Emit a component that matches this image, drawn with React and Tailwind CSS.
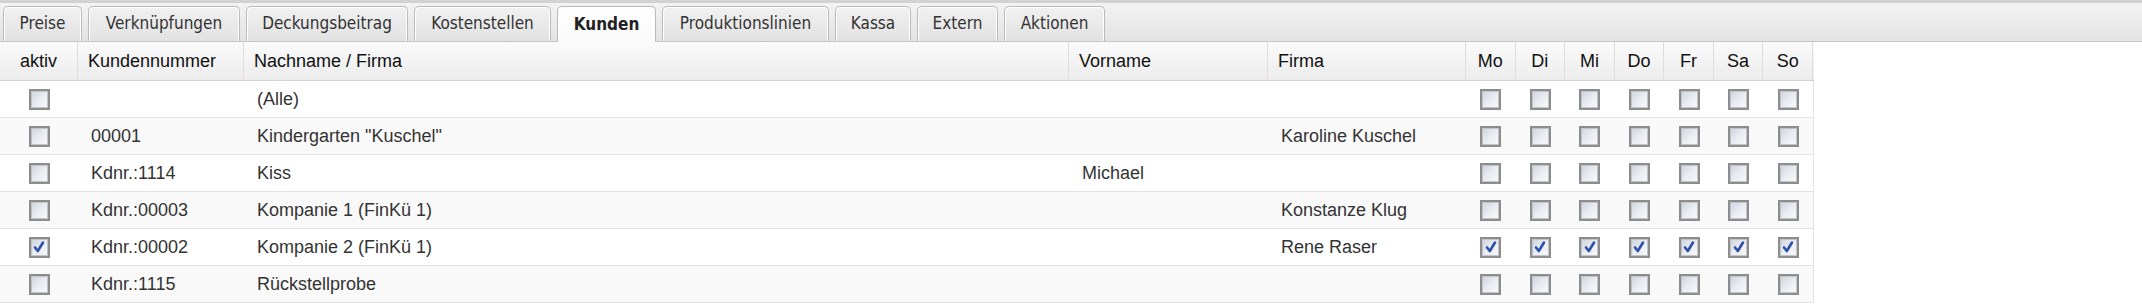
import React from 'react';

const tabs = [
  { label: 'Preise', w: 'w-[79px]' },
  { label: 'Verknüpfungen', w: 'w-[152px]' },
  { label: 'Deckungsbeitrag', w: 'w-[162px]' },
  { label: 'Kostenstellen', w: 'w-[137px]' },
  { label: 'Kunden', w: 'w-[99px]', active: true },
  { label: 'Produktionslinien', w: 'w-[167px]' },
  { label: 'Kassa', w: 'w-[76px]' },
  { label: 'Extern', w: 'w-[81px]' },
  { label: 'Aktionen', w: 'w-[101px]' },
];

const days = ['Mo', 'Di', 'Mi', 'Do', 'Fr', 'Sa', 'So'];

const rows = [
  { aktiv: false, nr: '', name: '(Alle)', vorname: '', firma: '', days: false },
  { aktiv: false, nr: '00001', name: 'Kindergarten "Kuschel"', vorname: '', firma: 'Karoline Kuschel', days: false },
  { aktiv: false, nr: 'Kdnr.:1114', name: 'Kiss', vorname: 'Michael', firma: '', days: false },
  { aktiv: false, nr: 'Kdnr.:00003', name: 'Kompanie 1 (FinKü 1)', vorname: '', firma: 'Konstanze Klug', days: false },
  { aktiv: true, nr: 'Kdnr.:00002', name: 'Kompanie 2 (FinKü 1)', vorname: '', firma: 'Rene Raser', days: true },
  { aktiv: false, nr: 'Kdnr.:1115', name: 'Rückstellprobe', vorname: '', firma: '', days: false },
];

const cols = 'grid grid-cols-[78px_166px_825px_199px_198px_repeat(7,49.57px)]';

function Checkbox({ checked }) {
  return (
    <span className="flex h-[21px] w-[21px] items-center justify-center border-2 border-[#8d8d8d] bg-gradient-to-br from-[#cdd2dc] via-[#e9ecf1] to-[#fafafb] shadow-[inset_0_0_0_1px_#c2c4c9]">
      {checked && (
        <svg width="14" height="14" viewBox="0 0 14 14">
          <path d="M3 7.5 L5.8 11 L11 2.5" fill="none" stroke="#2f50a8" strokeWidth="2.6" strokeLinecap="round" strokeLinejoin="round" />
        </svg>
      )}
    </span>
  );
}

export default function App() {
  return (
    <div className="min-h-[304px] w-[2142px] bg-white font-['Liberation_Sans',Arial,sans-serif]">
      {/* Tab bar */}
      <div className="flex h-[42px] items-end gap-[6px] border-t-[3px] border-b border-t-[#d2d2d2] border-b-[#c6c6c6] bg-gradient-to-b from-[#f3f3f3] to-[#e3e3e3] pl-[3px]">
        {tabs.map((t) =>
          t.active ? (
            <div
              key={t.label}
              className={`${t.w} -mb-px flex h-[36px] items-center justify-center rounded-t-[5px] border border-b-0 border-[#b9b9b9] bg-gradient-to-b from-white to-[#fafafa] font-['DejaVu_Sans_Condensed','DejaVu_Sans',sans-serif] text-[17px] font-bold text-[#222] shadow-[inset_1px_1px_0_#fff,inset_-1px_0_0_#fff]`}
            >
              {t.label}
            </div>
          ) : (
            <div
              key={t.label}
              className={`${t.w} flex h-[35px] items-center justify-center rounded-t-[5px] border border-b-0 border-[#bababa] bg-gradient-to-b from-[#f1f1f1] to-[#e2e2e2] font-['DejaVu_Sans_Condensed','DejaVu_Sans',sans-serif] text-[17px] text-[#333] shadow-[inset_1px_1px_0_#fff,inset_-1px_0_0_#fff]`}
            >
              {t.label}
            </div>
          )
        )}
      </div>

      {/* Table */}
      <div className="w-[1814px] text-[18px]">
        <div className={`${cols} h-[39px] border-b border-[#d3d3d3] bg-gradient-to-b from-[#fbfbfb] to-[#ececec] text-[#111]`}>
          <div className="flex items-center justify-center border-r border-[#dddddd]">aktiv</div>
          <div className="flex items-center border-r border-[#dddddd] px-[10px]">Kundennummer</div>
          <div className="flex items-center border-r border-[#dddddd] px-[10px]">Nachname / Firma</div>
          <div className="flex items-center border-r border-[#dddddd] px-[10px]">Vorname</div>
          <div className="flex items-center border-r border-[#dddddd] px-[10px]">Firma</div>
          {days.map((d) => (
            <div key={d} className="flex items-center justify-center border-r border-[#dddddd]">
              {d}
            </div>
          ))}
        </div>

        {rows.map((r, i) => (
          <div
            key={i}
            className={`${cols} h-[37px] border-r border-b border-[#e3e3e3] text-[#333] ${i % 2 === 1 ? 'bg-[#f9f9f9]' : 'bg-white'}`}
          >
            <div className="flex items-center justify-center">
              <Checkbox checked={r.aktiv} />
            </div>
            <div className="flex items-center px-[13px]">{r.nr}</div>
            <div className="flex items-center px-[13px]">{r.name}</div>
            <div className="flex items-center px-[13px]">{r.vorname}</div>
            <div className="flex items-center px-[13px]">{r.firma}</div>
            {days.map((d) => (
              <div key={d} className="flex items-center justify-center">
                <Checkbox checked={r.days} />
              </div>
            ))}
          </div>
        ))}
      </div>
    </div>
  );
}
